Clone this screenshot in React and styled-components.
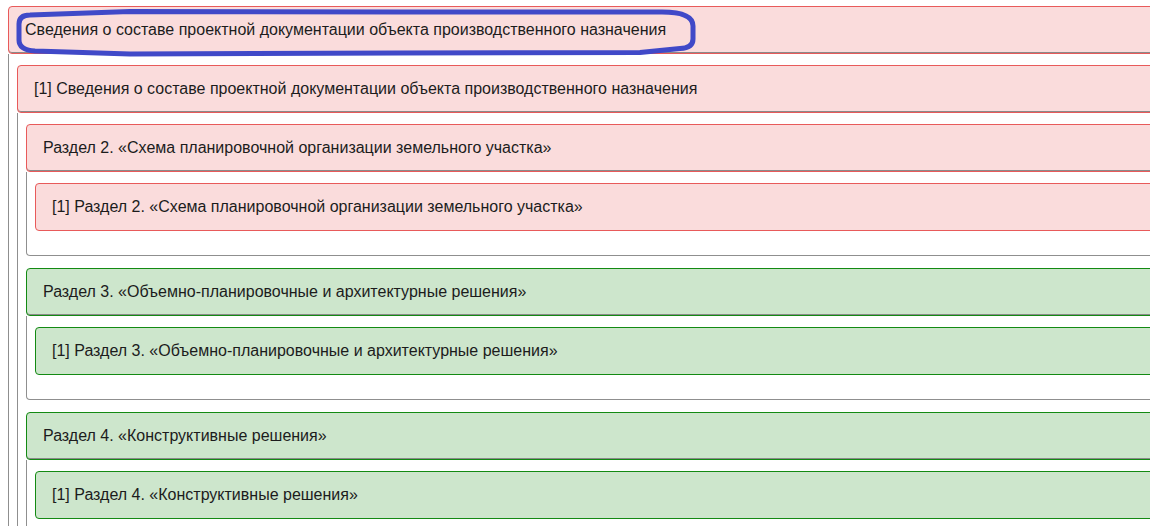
import React from 'react';
import styled, { createGlobalStyle } from 'styled-components';

const GlobalStyle = createGlobalStyle`
    body {
        margin: 0;
        background: #fff;
        overflow: hidden;
        font-family: "Liberation Sans", Arial, sans-serif;
    }
`;

const tones = {
    danger: { border: '#e85a5a', bg: '#fadcdc' },
    success: { border: '#138a13', bg: '#cde6cc' },
};

const Page = styled.div`
    position: relative;
    width: 1200px;
    padding: 6px 0 0 8px;
`;

const PanelWrap = styled.div`
    margin-bottom: 12px;
`;

const Heading = styled.div`
    background: ${p => tones[p.$tone].bg};
    border: 1px solid ${p => tones[p.$tone].border};
    border-radius: 4px;
    box-shadow: ${p => (p.$hasBody ? 'inset 0 -1px 0 #8a8a8a' : 'none')};
    padding: 14px 16px;
    font-size: 16px;
    line-height: 18px;
    color: #1c1c1c;
    white-space: nowrap;
`;

const Body = styled.div`
    border: 1px solid #8f8f8f;
    border-top: none;
    border-radius: 0 0 4px 4px;
    padding: 11px 8px 12px 8px;
`;

const Marker = styled.svg`
    position: absolute;
    left: 0;
    top: 0;
    pointer-events: none;
`;

const Panel = ({ title, tone = 'danger', children }) => (
    <PanelWrap>
        <Heading $tone={tone} $hasBody={!!children}>{title}</Heading>
        {children && <Body>{children}</Body>}
    </PanelWrap>
);

const sections = [
    { name: 'Раздел 2. «Схема планировочной организации земельного участка»', tone: 'danger' },
    { name: 'Раздел 3. «Объемно-планировочные и архитектурные решения»', tone: 'success' },
    { name: 'Раздел 4. «Конструктивные решения»', tone: 'success' },
];

const App = () => {
    const title = 'Сведения о составе проектной документации объекта производственного назначения';
    return (
        <Page>
            <GlobalStyle />
            <Panel title={title}>
                <Panel title={`[1] ${title}`}>
                    {sections.map(s => (
                        <Panel key={s.name} title={s.name} tone={s.tone}>
                            <Panel title={`[1] ${s.name}`} tone={s.tone} />
                        </Panel>
                    ))}
                </Panel>
            </Panel>
            {/* hand drawn highlight around the main heading */}
            <Marker width="720" height="70">
                <path
                    d="M 19 24 Q 19 15 30 15 L 130 11.5 L 400 12 L 662 12 Q 693 12 693 26 L 693 39 Q 693 48 680 48.5 L 640 52.5 L 400 53 L 130 54 L 35 51 Q 19 50 19 40 Z"
                    fill="none"
                    stroke="#4049c8"
                    strokeWidth="5"
                    strokeLinejoin="round"
                />
            </Marker>
        </Page>
    );
};

export default App;
